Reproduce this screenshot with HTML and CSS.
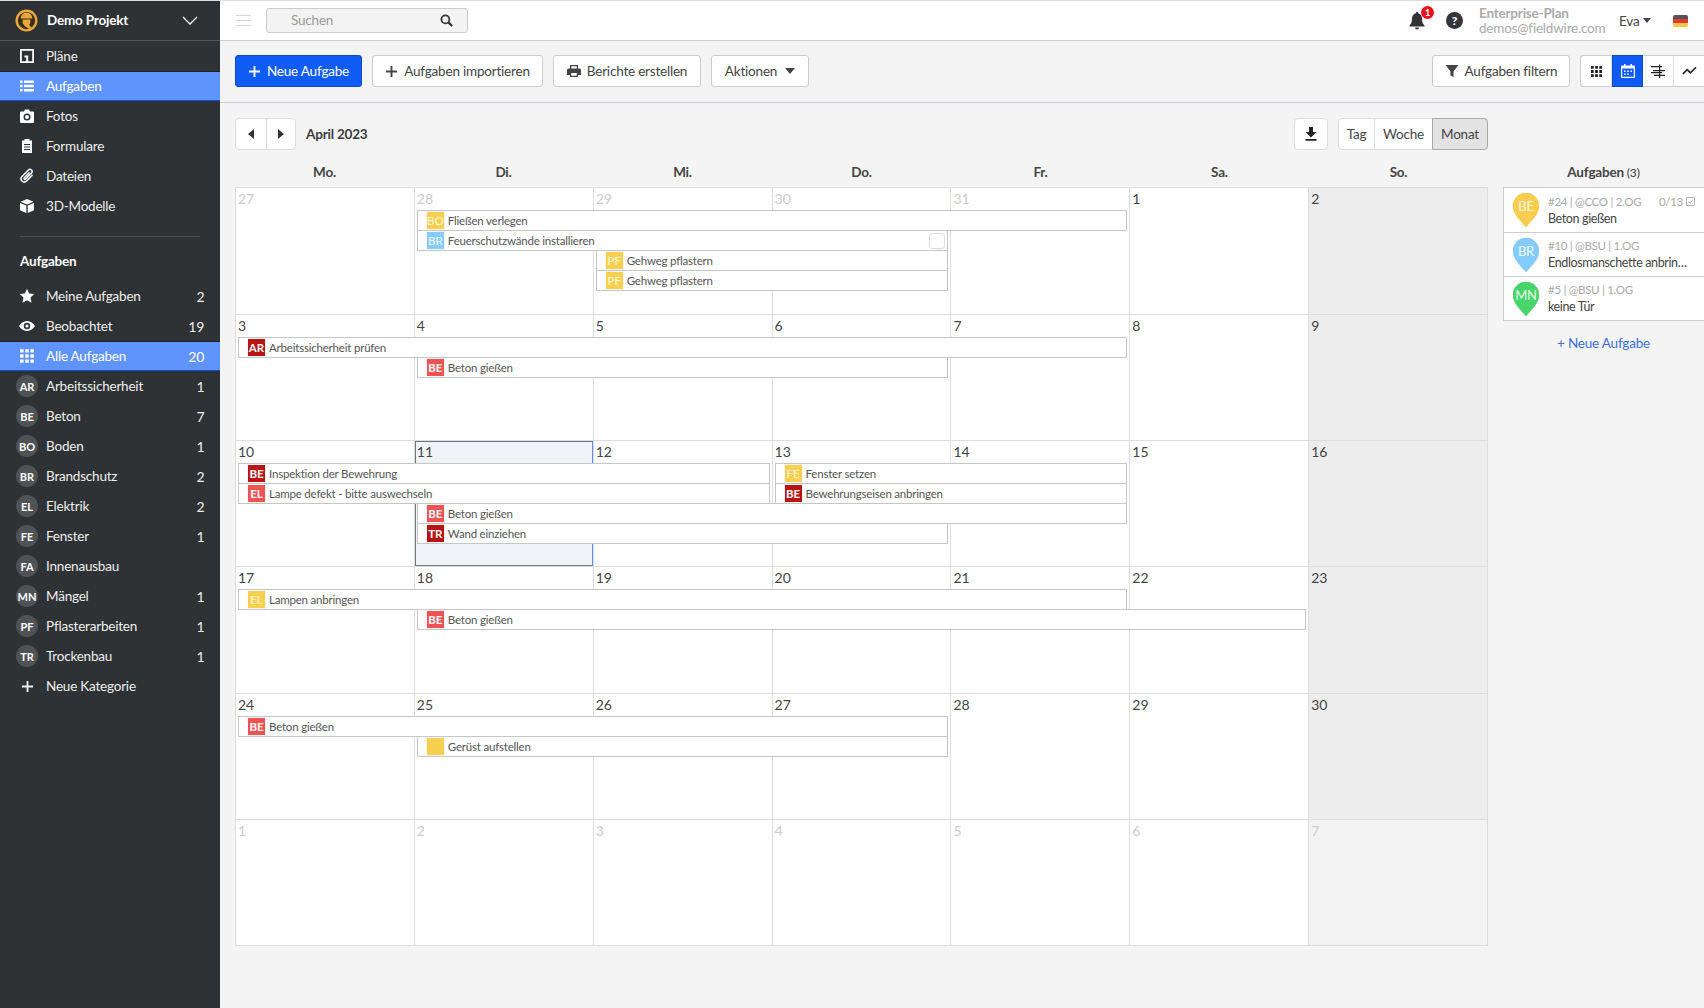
FILE: index.html
```html
<!DOCTYPE html>
<html lang="de">
<head>
<meta charset="utf-8">
<title>Aufgaben</title>
<link rel="stylesheet" href="styles.css">
</head>
<body>
<svg class="defs" aria-hidden="true">
  <symbol id="i-grid" viewBox="0 0 14 14"><path d="M1 1h3v3H1zM5.500 1h3v3h-3zM10 1h3v3h-3zM1 5.500h3v3H1zM5.500 5.500h3v3h-3zM10 5.500h3v3h-3zM1 10h3v3H1zM5.500 10h3v3h-3zM10 10h3v3h-3z"/></symbol>
  <symbol id="i-plus" viewBox="0 0 14 14"><path d="M6 1h2v5h5v2H8v5H6V8H1V6h5z"/></symbol>
  <symbol id="i-caret" viewBox="0 0 10 6"><path d="M0 0h10L5 6z"/></symbol>
</svg>
<div class="app">
  <aside class="side">
    <div class="side-head">
      <svg class="logo" viewBox="0 0 24 24"><circle cx="12" cy="12" r="11.500" fill="#e7a73a"/><circle cx="12" cy="12" r="9" fill="#3a2f1c"/><path d="M6 10c0-4 3-6 6-6s6 2 6 6z" fill="#e7a73a"/><path d="M8 11h8v3c0 2-2 3-4 3s-4-1-4-3z" fill="#e7a73a"/><path d="M9 17l6 4 2-2-3-3z" fill="#e7a73a"/></svg>
      <span class="side-title">Demo Projekt</span>
      <svg class="chev" viewBox="0 0 16 10"><path d="M1 1l7 7 7-7" fill="none" stroke="#fff" stroke-width="1.300"/></svg>
    </div>
    <a class="nav"><span class="ico"><svg viewBox="0 0 16 16" class="svg14"><path fill-rule="evenodd" d="M1 1h14v14H1zM2.800 2.800v10.400h4.400V9.500H5.500V7.500h3.700v5.700h4V2.800z"/></svg></span>Pläne</a>
    <a class="nav active"><span class="ico"><svg viewBox="0 0 16 16" class="svg14"><path d="M1 2.500h2.500v2.500H1zM5 2.500h10v2.500H5zM1 6.800h2.500v2.500H1zM5 6.800h10v2.500H5zM1 11h2.500v2.500H1zM5 11h10v2.500H5z"/></svg></span>Aufgaben</a>
    <a class="nav"><span class="ico"><svg viewBox="0 0 16 16" class="svg14"><path fill-rule="evenodd" d="M2 3.500h3L6 1.500h4l1 2h3a1 1 0 0 1 1 1V14a1 1 0 0 1-1 1H2a1 1 0 0 1-1-1V4.500a1 1 0 0 1 1-1zM8 5.500a3.500 3.500 0 1 0 0 7 3.500 3.500 0 0 0 0-7zM8 7a2 2 0 1 1 0 4 2 2 0 0 1 0-4z"/></svg></span>Fotos</a>
    <a class="nav"><span class="ico"><svg viewBox="0 0 16 16" class="svg14"><path fill-rule="evenodd" d="M3 2.500h2.500V1h5v1.500H13V15H3zM5 6v1h6V6zM5 8.500v1h6v-1zM5 11v1h6v-1z"/></svg></span>Formulare</a>
    <a class="nav"><span class="ico"><svg viewBox="0 0 16 16" class="svg14"><path d="M13.500 7L7.500 13a3 3 0 0 1-4.500-4.500l6.500-6.500a2 2 0 0 1 3 3L6.500 11a.8.8 0 0 1-1.300-1.200L10.500 4.500" fill="none" stroke="#fff" stroke-width="1.500"/></svg></span>Dateien</a>
    <a class="nav"><span class="ico"><svg viewBox="0 0 16 16" class="svg14"><path d="M8 1l6.500 2.700L8 6.400 1.500 3.700zM1 5l6.300 2.600V15L1 12.200zM15 5L8.700 7.600V15l6.300-2.800z"/></svg></span>3D-Modelle</a>
    <div class="side-line"></div>
    <div class="side-heading">Aufgaben</div>
    <a class="nav"><span class="ico"><svg viewBox="0 0 16 16" class="svg14"><path d="M8 .8l2.200 4.700 5.100.6-3.800 3.500 1 5.100L8 12.200l-4.500 2.500 1-5.100L.7 6.100l5.100-.6z"/></svg></span>Meine Aufgaben<span class="count">2</span></a>
    <a class="nav"><span class="ico"><svg viewBox="0 0 16 16" class="svg14"><path fill-rule="evenodd" d="M8 3c3.500 0 6.300 2.200 8 5-1.700 2.800-4.500 5-8 5s-6.300-2.200-8-5c1.700-2.800 4.500-5 8-5zm0 1.800a3.200 3.200 0 1 0 0 6.400 3.200 3.200 0 0 0 0-6.400zM8 6.500a1.500 1.500 0 1 1 0 3 1.500 1.500 0 0 1 0-3z"/></svg></span>Beobachtet<span class="count">19</span></a>
    <a class="nav active"><span class="ico"><svg class="svg14"><use href="#i-grid"/></svg></span>Alle Aufgaben<span class="count">20</span></a>
    <a class="nav"><span class="avatar">AR</span>Arbeitssicherheit<span class="count">1</span></a>
    <a class="nav"><span class="avatar">BE</span>Beton<span class="count">7</span></a>
    <a class="nav"><span class="avatar">BO</span>Boden<span class="count">1</span></a>
    <a class="nav"><span class="avatar">BR</span>Brandschutz<span class="count">2</span></a>
    <a class="nav"><span class="avatar">EL</span>Elektrik<span class="count">2</span></a>
    <a class="nav"><span class="avatar">FE</span>Fenster<span class="count">1</span></a>
    <a class="nav"><span class="avatar">FA</span>Innenausbau</a>
    <a class="nav"><span class="avatar">MN</span>Mängel<span class="count">1</span></a>
    <a class="nav"><span class="avatar">PF</span>Pflasterarbeiten<span class="count">1</span></a>
    <a class="nav"><span class="avatar">TR</span>Trockenbau<span class="count">1</span></a>
    <a class="nav"><span class="ico"><svg class="svg12"><use href="#i-plus"/></svg></span>Neue Kategorie</a>
  </aside>

  <main class="main">
    <header class="top">
      <div class="burger"><i></i><i></i><i></i></div>
      <div class="search"><span>Suchen</span>
        <svg viewBox="0 0 14 14" class="svg13"><circle cx="5.800" cy="5.800" r="4.300" fill="none" stroke="#333" stroke-width="1.900"/><path d="M9 9l4 4" stroke="#333" stroke-width="2.400"/></svg>
      </div>
      <div class="top-right">
        <div class="bell">
          <svg viewBox="0 0 16 18" class="svg-bell"><path d="M8 0a1.200 1.200 0 0 1 1.200 1.300C11.800 1.900 13 4 13 6.500c0 4 1 5.500 2.500 7v1H.5v-1C2 12 3 10.500 3 6.500c0-2.500 1.200-4.600 3.800-5.200A1.200 1.200 0 0 1 8 0zM6 15.500h4a2 2 0 0 1-4 0z"/></svg>
          <span class="badge">1</span>
        </div>
        <span class="help">?</span>
        <div class="plan"><b>Enterprise-Plan</b><span>demos@fieldwire.com</span></div>
        <div class="user">Eva<svg class="caret-s"><use href="#i-caret"/></svg></div>
        <div class="flag"></div>
      </div>
    </header>

    <div class="toolbar">
      <button class="btn primary b-new"><svg class="svg12"><use href="#i-plus"/></svg>Neue Aufgabe</button>
      <button class="btn b-imp"><svg class="svg12"><use href="#i-plus"/></svg>Aufgaben importieren</button>
      <button class="btn b-rep"><svg viewBox="0 0 14 14" class="svg14"><path fill-rule="evenodd" d="M3 1h8v3.500h1.500A1.500 1.500 0 0 1 14 6v5h-3v2H3v-2H0V6a1.500 1.500 0 0 1 1.500-1.500H3zM4.200 2.200v2.300h5.600V2.200zM4.200 9v2.800h5.600V9z"/></svg>Berichte erstellen</button>
      <button class="btn b-act">Aktionen<svg class="caret"><use href="#i-caret"/></svg></button>
      <div class="toolbar-right">
        <button class="btn b-filter"><svg viewBox="0 0 14 14" class="svg14"><path d="M.5 1h13L8.500 7.500V13l-3-1.500v-4z"/></svg>Aufgaben filtern</button>
        <div class="views">
          <span class="view"><svg class="svg13"><use href="#i-grid"/></svg></span>
          <span class="view on"><svg viewBox="0 0 14 14" class="svg14"><path fill-rule="evenodd" d="M3 0h1.500v1.500h5V0H11v1.500h2a1 1 0 0 1 1 1V13a1 1 0 0 1-1 1H1a1 1 0 0 1-1-1V2.500a1 1 0 0 1 1-1h2zM1.200 4.500V12.800h11.600V4.500zM3 6.500h1.500V8H3zM6.200 6.500h1.500V8H6.200zM9.500 6.500H11V8H9.500zM3 9.500h1.500V11H3zM6.200 9.500h1.500V11H6.200z"/></svg></span>
          <span class="view"><svg viewBox="0 0 14 14" class="svg14"><path d="M0 2h8V.5h1.200V2H11v1.200H9.200V6H14v1.200H9.200V8H11v1.200H9.200v1.600H14V12H9.200v2H8v-2H3v-1.200h5V9.200H0V8h8v-.8H2V6h6V3.200H0z"/></svg></span>
          <span class="view"><svg viewBox="0 0 16 12" class="svg15"><path d="M1 9l4.500-4.500L9 8l6-6" fill="none" stroke="#222" stroke-width="1.700"/></svg></span>
        </div>
      </div>
    </div>

    <div class="content">
      <section class="cal">
        <div class="cal-bar">
          <div class="cal-left">
            <div class="pager">
              <span class="page"><svg viewBox="0 0 6 10" class="tri"><path d="M6 0v10L0 5z"/></svg></span>
              <span class="page"><svg viewBox="0 0 6 10" class="tri"><path d="M0 0v10l6-5z"/></svg></span>
            </div>
            <span class="month">April 2023</span>
          </div>
          <div class="cal-right">
            <span class="dl"><svg viewBox="0 0 14 14" class="svg14"><path d="M5 0h4v5h3.500L7 10.500 1.500 5H5zM1.500 12h11v1.700h-11z"/></svg></span>
            <div class="seg">
              <span class="seg-i seg-tag">Tag</span>
              <span class="seg-i seg-woche">Woche</span>
              <span class="seg-i seg-monat">Monat</span>
            </div>
          </div>
        </div>
        <div class="weekdays"><span>Mo.</span><span>Di.</span><span>Mi.</span><span>Do.</span><span>Fr.</span><span>Sa.</span><span>So.</span></div>
        <div class="grid">
          <div class="week">
            <div class="cell c1 out">27</div><div class="cell c2 out">28</div><div class="cell c3 out">29</div><div class="cell c4 out">30</div><div class="cell c5 out">31</div><div class="cell c6">1</div><div class="cell c7 sun">2</div>
            <div class="ev c2 s4 r1"><span class="chip yellow">BO</span>Fließen verlegen</div>
            <div class="ev c2 s3 r2"><span class="chip blue">BR</span>Feuerschutzwände installieren<span class="ev-check"></span></div>
            <div class="ev c3 s2 r3"><span class="chip yellow">PF</span>Gehweg pflastern</div>
            <div class="ev c3 s2 r4"><span class="chip yellow">PF</span>Gehweg pflastern</div>
          </div>
          <div class="week">
            <div class="cell c1">3</div><div class="cell c2">4</div><div class="cell c3">5</div><div class="cell c4">6</div><div class="cell c5">7</div><div class="cell c6">8</div><div class="cell c7 sun">9</div>
            <div class="ev c1 s5 r1"><span class="chip dark">AR</span>Arbeitssicherheit prüfen</div>
            <div class="ev c2 s3 r2"><span class="chip red">BE</span>Beton gießen</div>
          </div>
          <div class="week">
            <div class="cell c1">10</div><div class="cell c2 today">11</div><div class="cell c3">12</div><div class="cell c4">13</div><div class="cell c5">14</div><div class="cell c6">15</div><div class="cell c7 sun">16</div>
            <div class="ev c1 s3 r1"><span class="chip dark">BE</span>Inspektion der Bewehrung</div>
            <div class="ev c1 s3 r2"><span class="chip red">EL</span>Lampe defekt - bitte auswechseln</div>
            <div class="ev c4 s2 r1"><span class="chip yellow">FE</span>Fenster setzen</div>
            <div class="ev c4 s2 r2"><span class="chip dark">BE</span>Bewehrungseisen anbringen</div>
            <div class="ev c2 s4 r3"><span class="chip red">BE</span>Beton gießen</div>
            <div class="ev c2 s3 r4"><span class="chip dark">TR</span>Wand einziehen</div>
          </div>
          <div class="week">
            <div class="cell c1">17</div><div class="cell c2">18</div><div class="cell c3">19</div><div class="cell c4">20</div><div class="cell c5">21</div><div class="cell c6">22</div><div class="cell c7 sun">23</div>
            <div class="ev c1 s5 r1"><span class="chip yellow">EL</span>Lampen anbringen</div>
            <div class="ev c2 s5 r2"><span class="chip red">BE</span>Beton gießen</div>
          </div>
          <div class="week">
            <div class="cell c1">24</div><div class="cell c2">25</div><div class="cell c3">26</div><div class="cell c4">27</div><div class="cell c5">28</div><div class="cell c6">29</div><div class="cell c7 sun">30</div>
            <div class="ev c1 s4 r1"><span class="chip red">BE</span>Beton gießen</div>
            <div class="ev c2 s3 r2"><span class="chip yellow"></span>Gerüst aufstellen</div>
          </div>
          <div class="week">
            <div class="cell c1 out">1</div><div class="cell c2 out">2</div><div class="cell c3 out">3</div><div class="cell c4 out">4</div><div class="cell c5 out">5</div><div class="cell c6 out">6</div><div class="cell c7 out sun-out">7</div>
          </div>
        </div>
      </section>

      <aside class="panel">
        <h2 class="panel-title">Aufgaben <small>(3)</small></h2>
        <div class="tasks">
          <div class="task">
            <svg class="pin" viewBox="0 0 26 34"><path class="pin-y" d="M13 0C5.800 0 0 5.800 0 13c0 8 8 15 13 21 5-6 13-13 13-21C26 5.800 20.200 0 13 0z"/><text x="13" y="18" text-anchor="middle">BE</text></svg>
            <div class="task-body">
              <div class="task-meta"><span>#24 | @CCO | 2.OG</span><span class="task-check">0/13<svg viewBox="0 0 10 10" class="svg9"><path d="M.5.5h9v9h-9z" fill="none" stroke="#aaa"/><path d="M2.500 5l2 2 3-4" fill="none" stroke="#999"/></svg></span></div>
              <div class="task-title">Beton gießen</div>
            </div>
          </div>
          <div class="task">
            <svg class="pin" viewBox="0 0 26 34"><path class="pin-b" d="M13 0C5.800 0 0 5.800 0 13c0 8 8 15 13 21 5-6 13-13 13-21C26 5.800 20.200 0 13 0z"/><text x="13" y="18" text-anchor="middle">BR</text></svg>
            <div class="task-body">
              <div class="task-meta"><span>#10 | @BSU | 1.OG</span></div>
              <div class="task-title">Endlosmanschette anbrin…</div>
            </div>
          </div>
          <div class="task">
            <svg class="pin" viewBox="0 0 26 34"><path class="pin-g" d="M13 0C5.800 0 0 5.800 0 13c0 8 8 15 13 21 5-6 13-13 13-21C26 5.800 20.200 0 13 0z"/><text x="13" y="18" text-anchor="middle">MN</text></svg>
            <div class="task-body">
              <div class="task-meta"><span>#5 | @BSU | 1.OG</span></div>
              <div class="task-title">keine Tür</div>
            </div>
          </div>
        </div>
        <a class="panel-new">+ Neue Aufgabe</a>
      </aside>
    </div>
  </main>
</div>
</body>
</html>
```
FILE: styles.css
```css
* { box-sizing: border-box; }
html, body { margin: 0; height: 100%; overflow: hidden; }
body { font-family: Lato, "Open Sans", sans-serif; font-size: 13.5px; letter-spacing: -.015em; color: #444; background: #f4f4f4; }
.defs { display: none; }
.app { display: flex; height: 1008px; border-top: 1px solid #ddd; }

/* sidebar */
.side { width: 220px; flex: none; background: #2f3234; color: #f0f0f0; }
.side-head { height: 40px; display: flex; align-items: center; padding: 0 22px 1px 15px; border-bottom: 1px solid #55585a; }
.logo { width: 23px; height: 23px; flex: none; }
.side-title { margin-left: 9px; font-weight: 700; color: #fff; flex: 1; }
.chev { width: 16px; height: 10px; margin-top: 2px; }
.nav { display: flex; align-items: center; height: 30px; padding: 0 15.500px 0 16px; color: #eee; }
.nav.active { background: #5f94ff; color: #fff; border-top: 1px solid #222; border-bottom: 1px solid #0f4fd8; }
.ico { width: 22px; height: 22px; margin-right: 8px; display: flex; align-items: center; justify-content: center; flex: none; fill: #fff; }
.avatar { width: 22px; height: 22px; margin-right: 8px; border-radius: 50%; background: #505355; color: #fff; font-size: 11px; letter-spacing: 0; font-weight: 700; display: flex; align-items: center; justify-content: center; flex: none; }
.count { margin-left: auto; font-size: 14px; letter-spacing: 0; }
.side-line { height: 1px; background: #4b4e50; margin: 15px 20px 9px; }
.side-heading { height: 30px; line-height: 30px; padding-left: 20px; font-weight: 700; color: #fff; margin-bottom: 5px; }
.svg14 { width: 14px; height: 14px; flex: none; fill: currentColor; }
.side .svg14 { width: 16px; height: 16px; fill: #fff; }
.svg12 { width: 13px; height: 13px; flex: none; fill: currentColor; }
.svg13 { width: 13px; height: 13px; flex: none; fill: currentColor; }
.svg15 { width: 15px; height: 12px; flex: none; }
.svg9 { width: 9px; height: 9px; margin-left: 3px; }

/* top */
.main { flex: 1; min-width: 0; overflow: hidden; display: flex; flex-direction: column; }
.top { height: 40px; flex: none; background: #fff; border-bottom: 1px solid #ccc; display: flex; align-items: center; padding-left: 16px; }
.burger { width: 15px; display: flex; flex-direction: column; gap: 4px; }
.burger i { height: 1px; background: #d5d5d5; display: block; }
.search { width: 202px; height: 25px; margin-left: 15px; background: #f3f3f3; border: 1px solid #ccc; border-radius: 3px; display: flex; align-items: center; justify-content: space-between; padding: 0 14px 1px 24px; color: #999; }
.top-right { margin-left: auto; display: flex; align-items: center; padding-right: 16px; }
.bell { position: relative; width: 16px; height: 18px; margin-right: 21px; }
.svg-bell { width: 16px; height: 18px; fill: #333; display: block; }
.badge { position: absolute; left: 12px; top: -6px; width: 13px; height: 13px; border-radius: 50%; background: #e8121a; color: #fff; font-size: 9px; font-weight: 700; text-align: center; line-height: 13px; }
.help { width: 17px; height: 17px; border-radius: 50%; background: #33363a; color: #fff; font-weight: 900; font-size: 12px; line-height: 17px; text-align: center; margin-right: 16px; }
.plan { display: flex; flex-direction: column; color: #aaa; line-height: 15px; width: 125px; }
.plan b { font-weight: 700; font-size: 13.500px; }
.user { margin-left: 15px; color: #444; display: flex; align-items: center; width: 54px; }
.caret-s { width: 8px; height: 5px; margin-left: 4px; fill: #444; }
.flag { width: 15px; height: 12px; border-radius: 2px; background: linear-gradient(#555 0 33%, #e23a32 33% 66%, #f3c93f 66%); }

/* toolbar */
.toolbar { height: 62px; flex: none; border-bottom: 1px solid #ccd; display: flex; align-items: flex-start; padding: 14px 0 0 15px; gap: 10px; }
.btn { height: 32px; font: inherit; letter-spacing: inherit; color: #444; background: #fff; border: 1px solid #ccc; border-radius: 3px; display: flex; align-items: center; justify-content: center; gap: 6px; padding: 0; }
.primary { background: #0f5cf5; border-color: #0b4bcc; color: #fff; }
.b-new { width: 127px; }
.b-imp { width: 171px; }
.b-rep { width: 148px; }
.b-act { width: 98px; gap: 8px; }
.caret { width: 10px; height: 6px; fill: #444; }
.toolbar-right { margin-left: auto; display: flex; gap: 10px; margin-right: -1px; }
.b-filter { width: 138px; }
.views { display: flex; height: 32px; background: #fff; border: 1px solid #ccc; border-right: 0; border-radius: 3px 0 0 3px; }
.view { width: 31px; display: flex; align-items: center; justify-content: center; border-right: 1px solid #ddd; color: #222; }
.view.on { background: #0f5cf5; color: #fff; border: 1px solid #0b4bcc; margin: -1px 0; height: 32px; }

/* content */
.content { display: flex; gap: 15px; padding: 15px 0 0 15px; flex: 1; }
.cal { width: 1253px; flex: none; }
.cal-bar { height: 32px; display: flex; justify-content: space-between; }
.cal-left, .cal-right { display: flex; align-items: center; }
.pager { display: flex; height: 32px; background: #fff; border: 1px solid #ddd; border-radius: 4px; }
.page { width: 29.500px; display: flex; align-items: center; justify-content: center; }
.page + .page { border-left: 1px solid #ddd; }
.tri { width: 6px; height: 10px; fill: #333; }
.month { margin-left: 10px; font-weight: 700; color: #3c3c3c; }
.dl { width: 34px; height: 32px; background: #fff; border: 1px solid #ddd; border-radius: 4px; display: flex; align-items: center; justify-content: center; color: #222; margin-right: 10px; }
.seg { display: flex; height: 32px; background: #fff; border: 1px solid #ddd; border-radius: 4px; }
.seg-i { display: flex; align-items: center; justify-content: center; }
.seg-tag { width: 35px; }
.seg-woche { width: 58px; border-left: 1px solid #ddd; }
.seg-monat { width: 56px; background: #e3e3e3; border: 1px solid #aaa; margin: -1px -1px -1px 0; border-radius: 0 4px 4px 0; }
.weekdays { height: 37.400px; display: grid; grid-template-columns: repeat(7, 1fr); align-items: center; padding-top: 7px; text-align: center; font-weight: 700; color: #444; }

/* calendar grid */
.grid { border-right: 1px solid #ddd; border-bottom: 1px solid #ddd; }
.week { height: 126.330px; display: grid; grid-template-columns: repeat(7, 1fr); grid-template-rows: 23px repeat(4, 20px) 1fr; }
.cell { grid-row: 1 / -1; background: #fff; border-left: 1px solid #ddd; border-top: 1px solid #ddd; padding: 1px 2px; line-height: 20px; font-size: 14px; letter-spacing: 0; color: #444; position: relative; min-width: 0; }
.cell.out { color: #ccc; }
.cell.sun { background: #ededed; }
.cell.sun-out { background: #f3f3f3; }
.cell.today { background: #f0f4f9; }
.cell.today::before { content: ""; position: absolute; inset: 0; border: 1px solid #6f7782; border-right-color: #5b8fee; }
.c1 { grid-column-start: 1; } .c2 { grid-column-start: 2; } .c3 { grid-column-start: 3; } .c4 { grid-column-start: 4; }
.c5 { grid-column-start: 5; } .c6 { grid-column-start: 6; } .c7 { grid-column-start: 7; }
.s2 { grid-column-end: span 2; } .s3 { grid-column-end: span 3; } .s4 { grid-column-end: span 4; } .s5 { grid-column-end: span 5; }
.r1 { grid-row-start: 2; } .r2 { grid-row-start: 3; } .r3 { grid-row-start: 4; } .r4 { grid-row-start: 5; }
.ev { position: relative; height: 21px; margin: 0 2px 0 3px; background: #fff; border: 1px solid #c6c6c6; padding-left: 9px; display: flex; align-items: center; font-size: 11.500px; color: #555; white-space: nowrap; }
.chip { width: 17px; height: 17px; margin-right: 4px; flex: none; font-size: 11.500px; letter-spacing: 0; line-height: 17px; text-align: center; color: #fff; box-shadow: 0 0 0 1px rgba(0,0,0,.04); overflow: hidden; }
.yellow { background: #f8d04f; color: rgba(255,255,255,.8); }
.blue { background: #86cdfd; color: rgba(255,255,255,.9); }
.dark { background: #b81414; font-weight: 700; }
.red { background: #ee5252; font-weight: 700; }
.ev-check { position: absolute; right: 2px; top: 2px; width: 16px; height: 16px; border: 1px solid #ddd; border-radius: 3px; background: #fff; }

/* panel */
.panel { flex: 1; min-width: 0; }
.panel-title { margin: 32px 0 0; height: 37px; padding-top: 7px; display: flex; align-items: center; justify-content: center; gap: 3px; font-size: 13.500px; font-weight: 700; color: #444; }
.panel-title small { font-size: 12px; font-weight: 500; }
.tasks { background: #fff; border: 1px solid #ccc; border-right: 0; margin-right: -1px; }
.task { height: 44px; display: flex; align-items: center; padding: 0 9px; }
.task + .task { border-top: 1px solid #ccc; }
.pin { width: 26px; height: 34px; flex: none; }
.pin text { font: 13px Lato, sans-serif; fill: rgba(255,255,255,.9); }
.pin-y { fill: #f9cd4d; stroke: #ecbc38; stroke-width: .5; }
.pin-b { fill: #84ccfb; stroke: #76b8e4; stroke-width: .5; }
.pin-g { fill: #46d768; stroke: #3fae60; stroke-width: .5; }
.task-body { margin-left: 9px; min-width: 0; flex: 1; padding-right: 1px; }
.task-meta { display: flex; justify-content: space-between; font-size: 11.500px; letter-spacing: -.025em; line-height: 16px; color: #aaa; }
.task-check { display: flex; align-items: center; }
.task-title { font-size: 12.500px; letter-spacing: -.03em; line-height: 17px; color: #444; white-space: nowrap; }
.panel-new { display: block; text-align: center; margin-top: 12px; color: #3b6fd8; line-height: 20px; }
```
